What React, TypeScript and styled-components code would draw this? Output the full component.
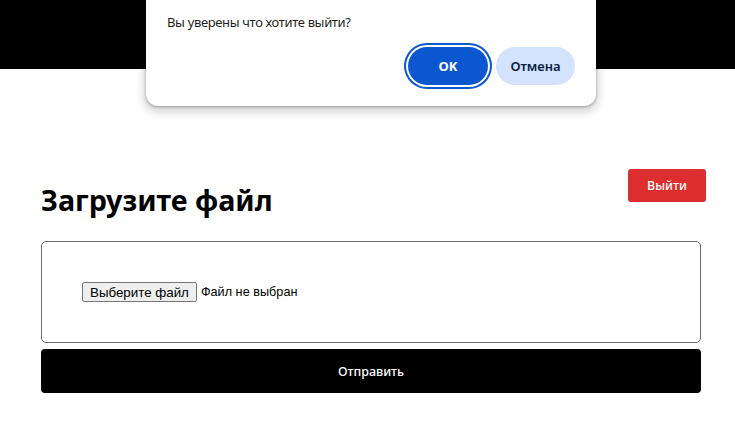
import React from 'react';
import styled, { createGlobalStyle } from 'styled-components';

const GlobalStyle = createGlobalStyle`
  html, body {
    margin: 0;
    padding: 0;
    background: #ffffff;
    font-family: 'Noto Sans', 'Open Sans', sans-serif;
    overflow: hidden;
  }
  * {
    box-sizing: border-box;
  }
`;

export default function App() {
  return (
    <Page>
      <GlobalStyle />
      <Header />
      <Main>
        <TopRow>
          <Title>Загрузите файл</Title>
          <ExitButton type='button'>Выйти</ExitButton>
        </TopRow>
        <Form onSubmit={(e) => e.preventDefault()}>
          <DropBox>
            <FileLabel>
              <HiddenInput type='file' />
              <FakeButton>Выберите файл</FakeButton>
              <FileName>Файл не выбран</FileName>
            </FileLabel>
          </DropBox>
          <SubmitButton type='submit'>Отправить</SubmitButton>
        </Form>
      </Main>

      <Dialog role='dialog'>
        <DialogTitle>Страница сообщает</DialogTitle>
        <DialogMessage>Вы уверены что хотите выйти?</DialogMessage>
        <DialogButtons>
          <DialogButton primary>OK</DialogButton>
          <DialogButton>Отмена</DialogButton>
        </DialogButtons>
      </Dialog>
    </Page>
  );
}

const Page = styled.div`
  position: relative;
  width: 735px;
  height: 421px;
  overflow: hidden;
`;

const Header = styled.header`
  height: 69px;
  background-color: #000000;
`;

const Main = styled.main`
  padding: 100px 29px 0 41px;
`;

const TopRow = styled.div`
  display: flex;
  justify-content: space-between;
  align-items: flex-start;
`;

const Title = styled.h1`
  margin: 14px 0 0;
  font-size: 28.7px;
  line-height: 34px;
  font-weight: 700;
  color: #000000;
`;

const ExitButton = styled.button`
  width: 78px;
  height: 33px;
  border: none;
  border-radius: 3px;
  background-color: #dc2e2e;
  color: #ffffff;
  font-family: 'Noto Sans', sans-serif;
  font-size: 12.5px;
  font-weight: 500;
  cursor: pointer;
`;

const Form = styled.form`
  width: 660px;
  margin-top: 24px;
  display: flex;
  flex-direction: column;
  gap: 6px;
`;

const DropBox = styled.div`
  height: 102px;
  border: 1px solid #6b6b6b;
  border-radius: 5px;
  display: flex;
  align-items: center;
  padding-left: 40px;
`;

const FileLabel = styled.label`
  display: flex;
  align-items: center;
  gap: 4px;
  font-family: 'Liberation Sans', Arial, sans-serif;
  font-size: 13.33px;
  color: #000000;
  cursor: pointer;
`;

const HiddenInput = styled.input`
  display: none;
`;

const FakeButton = styled.span`
  display: inline-flex;
  align-items: center;
  height: 20px;
  padding: 0 7px;
  border: 1px solid #767676;
  border-radius: 2px;
  background-color: #efefef;
`;

const FileName = styled.span`
  font-size: 12.7px;
`;

const SubmitButton = styled.button`
  height: 44px;
  border: none;
  border-radius: 4px;
  background-color: #000000;
  color: #ffffff;
  font-family: 'Noto Sans', sans-serif;
  font-size: 12.5px;
  font-weight: 500;
  cursor: pointer;
`;

const Dialog = styled.div`
  position: absolute;
  top: -40px;
  left: 146px;
  width: 450px;
  padding: 20px 21px 21px;
  background: #ffffff;
  border-radius: 12px;
  box-shadow: 0 1px 3px rgba(0, 0, 0, 0.3), 0 4px 8px 3px rgba(0, 0, 0, 0.15);
  font-family: 'Noto Sans', 'Open Sans', sans-serif;
`;

const DialogTitle = styled.div`
  height: 20px;
  line-height: 20px;
  font-size: 14px;
  color: #1f1f1f;
`;

const DialogMessage = styled.div`
  margin-top: 12px;
  font-size: 13px;
  letter-spacing: -0.35px;
  line-height: 20px;
  color: #1f1f1f;
`;

const DialogButtons = styled.div`
  display: flex;
  justify-content: flex-end;
  gap: 8px;
  margin-top: 15px;
`;

const DialogButton = styled.button<{ primary?: boolean }>`
  width: ${(p) => (p.primary ? '80px' : '79px')};
  height: 38px;
  border: none;
  border-radius: 19px;
  font-family: 'Noto Sans', sans-serif;
  font-size: 13px;
  font-weight: ${(p) => (p.primary ? 700 : 600)};
  background-color: ${(p) => (p.primary ? '#0b57d0' : '#d3e3fd')};
  color: ${(p) => (p.primary ? '#ffffff' : '#0a1f44')};
  box-shadow: ${(p) =>
    p.primary ? '0 0 0 2px #ffffff, 0 0 0 4px #0b57d0' : 'none'};
  cursor: pointer;
`;
